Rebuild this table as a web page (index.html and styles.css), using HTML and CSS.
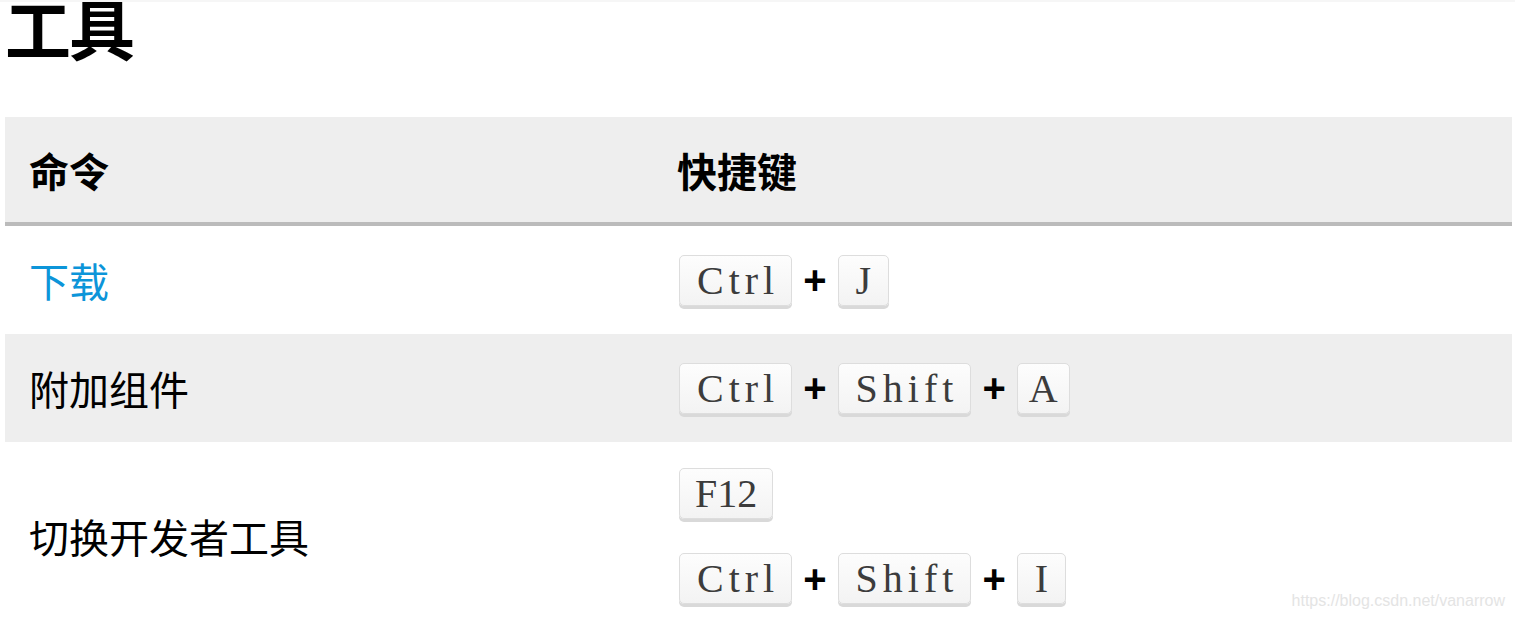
FILE: index.html
```html
<!DOCTYPE html>
<html lang="zh-CN">
<head>
<meta charset="utf-8">
<title>工具</title>
<link rel="stylesheet" href="styles.css">
</head>
<body>
<div class="page">
  <h1 class="title">工具</h1>
  <table class="shortcuts">
    <thead>
      <tr>
        <th class="col-cmd">命令</th>
        <th class="col-keys">快捷键</th>
      </tr>
    </thead>
    <tbody>
      <tr class="row-short">
        <td class="cmd"><a class="link" href="#">下载</a></td>
        <td>
          <div class="keyline"><kbd class="key key-word">Ctrl</kbd><span class="plus">+</span><kbd class="key">J</kbd></div>
        </td>
      </tr>
      <tr class="row-short row-alt">
        <td class="cmd">附加组件</td>
        <td>
          <div class="keyline"><kbd class="key key-word">Ctrl</kbd><span class="plus">+</span><kbd class="key key-word">Shift</kbd><span class="plus">+</span><kbd class="key key-broad">A</kbd></div>
        </td>
      </tr>
      <tr class="row-tall">
        <td class="cmd">切换开发者工具</td>
        <td>
          <div class="keylines">
            <div class="keyline"><kbd class="key key-fn">F12</kbd></div>
            <div class="keyline"><kbd class="key key-word">Ctrl</kbd><span class="plus">+</span><kbd class="key key-word">Shift</kbd><span class="plus">+</span><kbd class="key">I</kbd></div>
          </div>
        </td>
      </tr>
    </tbody>
  </table>
  <div class="watermark">https://blog.csdn.net/vanarrow</div>
</div>
</body>
</html>
```

FILE: styles.css
```css
html, body {
  margin: 0;
  padding: 0;
  background: #fff;
}

body {
  font-family: "Noto Sans CJK SC", "Liberation Sans", sans-serif;
  color: #000;
  border-top: 2px solid #f6f6f6;
}

.page {
  position: relative;
  padding: 0 3px 0 5px;
  height: 632px;
}

.title {
  margin: -16px 0 0 0;
  font-size: 66px;
  line-height: 80px;
  height: 131px;
  font-weight: 700;
  letter-spacing: -2px;
}

.shortcuts {
  width: 1507px;
  border-collapse: collapse;
  border-bottom: 2px solid #eee;
}

.shortcuts th {
  background: #eee;
  height: 105px;
  padding: 0 26px;
  text-align: left;
  font-size: 40px;
  font-weight: 700;
  text-indent: -2px;
  border-bottom: 4px solid #bbb;
}

.shortcuts .col-cmd {
  width: 596px;
}

.shortcuts td {
  padding: 0 26px;
  font-size: 40px;
  vertical-align: middle;
}

.shortcuts td.cmd {
  text-indent: -2px;
}

.row-short td {
  height: 108px;
}

.row-tall td {
  height: 188px;
}

.row-alt td {
  background: #eee;
}

.link {
  color: #0c95d9;
  text-decoration: none;
}

.keylines {
  display: flex;
  flex-direction: column;
  gap: 33px;
}

.keyline {
  display: flex;
  align-items: center;
  height: 52px;
}

.key {
  display: inline-block;
  box-sizing: border-box;
  height: 51px;
  padding: 0 17px;
  line-height: 50px;
  font-family: "Liberation Serif", "DejaVu Serif", serif;
  font-size: 40px;
  color: #3c3c3c;
  background: linear-gradient(#fdfdfd, #f3f3f3);
  border: 1px solid #ddd;
  border-radius: 5px;
  box-shadow: 0 3px 0 #d9d9d9;
}

.key-word {
  letter-spacing: 5px;
  padding: 0 12px 0 17px;
}

.key-fn {
  padding: 0 15px;
}

.key-broad {
  padding: 0 11px;
}

.plus {
  margin: 0 11px;
  font-family: "Liberation Sans", Arial, sans-serif;
  font-size: 40px;
  font-weight: 700;
  line-height: 48px;
}

.watermark {
  position: absolute;
  right: 10px;
  bottom: 8px;
  font-family: "Liberation Sans", Arial, sans-serif;
  font-size: 16px;
  color: #e4e4e4;
}
```
